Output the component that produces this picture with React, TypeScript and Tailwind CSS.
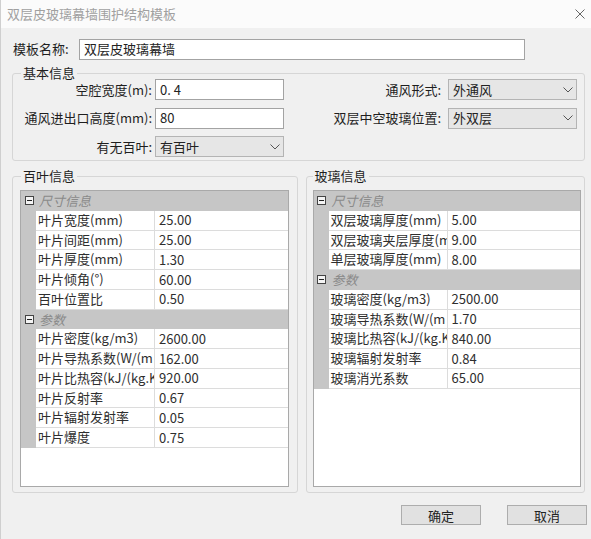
import React from 'react';

type Prop = { label: string; value: string };
type Category = { name: string; props: Prop[] };

const louverGrid: Category[] = [
  {
    name: '尺寸信息',
    props: [
      { label: '叶片宽度(mm)', value: '25.00' },
      { label: '叶片间距(mm)', value: '25.00' },
      { label: '叶片厚度(mm)', value: '1.30' },
      { label: '叶片倾角(°)', value: '60.00' },
      { label: '百叶位置比', value: '0.50' },
    ],
  },
  {
    name: '参数',
    props: [
      { label: '叶片密度(kg/m3)', value: '2600.00' },
      { label: '叶片导热系数(W/(m·K))', value: '162.00' },
      { label: '叶片比热容(kJ/(kg.K))', value: '920.00' },
      { label: '叶片反射率', value: '0.67' },
      { label: '叶片辐射发射率', value: '0.05' },
      { label: '叶片爆度', value: '0.75' },
    ],
  },
];

const glassGrid: Category[] = [
  {
    name: '尺寸信息',
    props: [
      { label: '双层玻璃厚度(mm)', value: '5.00' },
      { label: '双层玻璃夹层厚度(mm)', value: '9.00' },
      { label: '单层玻璃厚度(mm)', value: '8.00' },
    ],
  },
  {
    name: '参数',
    props: [
      { label: '玻璃密度(kg/m3)', value: '2500.00' },
      { label: '玻璃导热系数(W/(m·K))', value: '1.70' },
      { label: '玻璃比热容(kJ/(kg.K))', value: '840.00' },
      { label: '玻璃辐射发射率', value: '0.84' },
      { label: '玻璃消光系数', value: '65.00' },
    ],
  },
];

function Chevron() {
  return (
    <svg width="10" height="6" viewBox="0 0 10 6" className="shrink-0">
      <polyline points="0.5,0.5 5,5 9.5,0.5" fill="none" stroke="#555" strokeWidth="1" />
    </svg>
  );
}

function TextBox({ value, className = '' }: { value: string; className?: string }) {
  return (
    <div className={`flex h-[21px] items-center border border-[#a3a3a3] bg-white pl-[4px] text-[#222] ${className}`}>
      {value}
    </div>
  );
}

function ComboBox({ value }: { value: string }) {
  return (
    <div className="flex h-[21px] w-[129px] items-center justify-between border border-[#b4b4b4] bg-[#e6e6e6] pl-[4px] pr-[3px] text-[#222]">
      <span>{value}</span>
      <Chevron />
    </div>
  );
}

function MinusBox() {
  return (
    <svg width="9" height="9" viewBox="0 0 9 9">
      <rect x="0.5" y="0.5" width="8" height="8" fill="#f4f4f4" stroke="#444" />
      <line x1="2" y1="4.5" x2="7" y2="4.5" stroke="#222" />
    </svg>
  );
}

function PropertyGrid({ categories }: { categories: Category[] }) {
  return (
    <div className="h-[297px] overflow-hidden border border-[#a9a9a9] bg-white text-[#2e2e2e]">
      {categories.map((cat) => (
        <div key={cat.name}>
          <div className="flex h-[19.75px] items-center bg-[#c6c6c6]">
            <span className="flex w-[16px] justify-center">
              <MinusBox />
            </span>
            <span className="pl-[2px] italic text-[#8a8a8a]">{cat.name}</span>
          </div>
          <div className="flex">
            <div className="w-[15px] shrink-0 bg-[#c6c6c6]" />
            <div className="min-w-0 flex-1">
              {cat.props.map((p) => (
                <div key={p.label} className="flex h-[19.75px] border-b border-[#dcdcdc]">
                  <div className="w-[119px] shrink-0 overflow-hidden border-r border-[#dcdcdc] pl-[2px]">
                    <span className="block whitespace-nowrap leading-[18.75px]">{p.label}</span>
                  </div>
                  <div className="flex flex-1 items-center pl-[4px]">{p.value}</div>
                </div>
              ))}
            </div>
          </div>
        </div>
      ))}
    </div>
  );
}

export default function App() {
  return (
    <div className="flex h-[539px] w-[591px] flex-col border-l border-[#cfcfcf] bg-[#f0f0f0] font-['Microsoft_YaHei','Noto_Sans_CJK_SC',sans-serif] text-[13px] text-[#1e1e1e]">
      {/* title bar */}
      <div className="flex h-[28px] shrink-0 items-center justify-between bg-[#fbfbfb] pl-[6px] pr-[4px]">
        <span className="text-[#a0a0a0]">双层皮玻璃幕墙围护结构模板</span>
        <svg width="10" height="10" viewBox="0 0 10 10" className="mr-[2px]">
          <path d="M0.5 0.5 L9.5 9.5 M9.5 0.5 L0.5 9.5" stroke="#666" strokeWidth="1" />
        </svg>
      </div>

      <div className="flex flex-1 flex-col pl-[11px] pr-[6px]">
        {/* template name */}
        <div className="mt-[11px] flex h-[20px] items-center">
          <span className="w-[67px] pl-[1px]">模板名称:</span>
          <TextBox value="双层皮玻璃幕墙" className="h-[20px] w-[446px]" />
        </div>

        {/* basic info */}
        <fieldset className="mt-[8px] rounded-[3px] border border-[#d6d6d6] pb-[3px]">
          <legend className="ml-[8px] px-[2px] leading-[12px]">基本信息</legend>
          <div className="grid grid-cols-[139px_129px_158px_129px] gap-x-[3px] gap-y-[7.5px] [&>*:nth-child(4n+3)]:mr-[4px]">
            <span className="self-center text-right">空腔宽度(m):</span>
            <TextBox value="0. 4" />
            <span className="self-center text-right">通风形式:</span>
            <ComboBox value="外通风" />

            <span className="self-center text-right">通风进出口高度(mm):</span>
            <TextBox value="80" />
            <span className="self-center text-right">双层中空玻璃位置:</span>
            <ComboBox value="外双层" />

            <span className="self-center text-right">有无百叶:</span>
            <ComboBox value="有百叶" />
          </div>
        </fieldset>

        {/* louver / glass */}
        <div className="mt-[9px] flex gap-[8px]">
          <fieldset className="w-[286px] rounded-[3px] border border-[#d6d6d6] pb-[5px] pl-[7px] pr-[8px] pt-[8px]">
            <legend className="ml-[1px] px-[2px] leading-[12px]">百叶信息</legend>
            <PropertyGrid categories={louverGrid} />
          </fieldset>
          <fieldset className="w-[280px] rounded-[3px] border border-[#d6d6d6] pb-[5px] pl-[6px] pr-[3px] pt-[8px]">
            <legend className="px-[2px] leading-[12px]">玻璃信息</legend>
            <PropertyGrid categories={glassGrid} />
          </fieldset>
        </div>

        {/* dialog buttons */}
        <div className="mt-[12px] flex justify-end gap-[26px]">
          <button className="h-[20px] w-[80px] border border-[#adadad] bg-[#e1e1e1] text-[#222]">确定</button>
          <button className="-mr-[2px] h-[20px] w-[80px] border border-[#adadad] bg-[#e1e1e1] text-[#222]">取消</button>
        </div>
      </div>
    </div>
  );
}
